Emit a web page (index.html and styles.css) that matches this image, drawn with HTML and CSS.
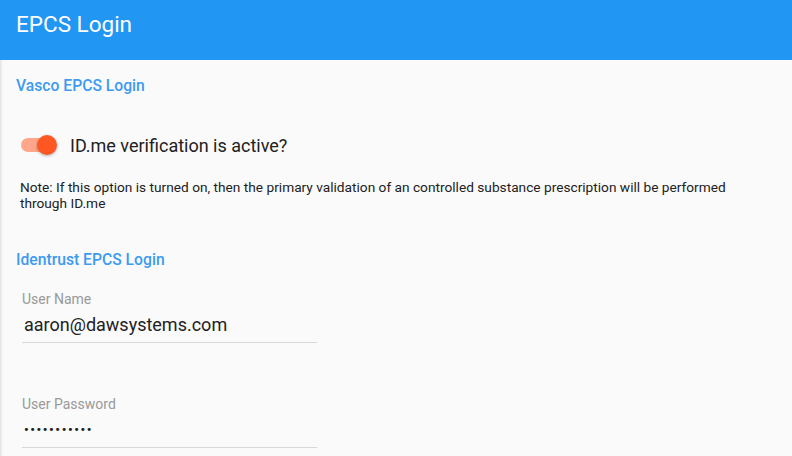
FILE: index.html
```html
<!DOCTYPE html>
<html>
<head>
<meta charset="utf-8">
<link rel="stylesheet" href="styles.css">
</head>
<body>
<header class="toolbar">EPCS Login</header>
<main class="content">
  <h2 class="section-title">Vasco EPCS Login</h2>
  <div class="toggle-row">
    <span class="toggle"><span class="track"></span><span class="thumb"></span></span>
    <span class="toggle-label">ID.me verification is active?</span>
  </div>
  <p class="note">Note: If this option is turned on, then the primary validation of an controlled substance prescription will be performed through ID.me</p>
  <h2 class="section-title second">Identrust EPCS Login</h2>
  <div class="field">
    <label class="field-label">User Name</label>
    <div class="field-value">aaron@dawsystems.com</div>
  </div>
  <div class="field pw">
    <label class="field-label">User Password</label>
    <div class="field-value dots">•••••••••••</div>
  </div>
</main>
</body>
</html>
```
FILE: styles.css
```css
html, body { margin: 0; padding: 0; }
body {
  background: #fafafa;
  font-family: Roboto, "Noto Sans", sans-serif;
  width: 792px;
  height: 456px;
  overflow: hidden;
  box-shadow: inset 3px 0 3px -2px rgba(0,0,0,0.12);
}
.toolbar {
  height: 60px;
  background: #2196f3;
  color: #fff;
  font-size: 22.5px;
  padding: 1px 0 0 16px;
  box-sizing: border-box;
  line-height: 46px;
}
.content { padding: 0 16px; }
.section-title {
  margin: 0;
  font-size: 15.7px;
  font-weight: 500;
  color: #3d9bf0;
  padding-top: 17px;
  line-height: 18px;
}
.section-title.second { padding-top: 40px; }
.toggle-row {
  display: flex;
  align-items: center;
  margin-top: 38px;
  padding-left: 5px;
  height: 24px;
}
.toggle { position: relative; width: 36px; height: 20px; display: inline-block; }
.track {
  position: absolute; left: 0; top: 3px; width: 34px; height: 14px;
  border-radius: 7px; background: #ffa68b;
}
.thumb {
  position: absolute; left: 16px; top: 0; width: 20px; height: 20px;
  border-radius: 50%; background: #ff5722;
  box-shadow: 0 1px 3px rgba(0,0,0,0.3);
}
.toggle-label {
  margin-left: 13px;
  font-size: 18px;
  color: #212121;
}
.note {
  margin: 22px 0 0 4px;
  font-size: 13.7px;
  line-height: 16px;
  color: #212121;
}
.field {
  width: 295px;
  margin-left: 6px;
  border-bottom: 1px solid #d8d8d8;
  padding-top: 22px;
}
.field.pw { margin-top: 31px; }
.field-label { display: block; font-size: 14px; color: #999; line-height: 16px; }
.field-value {
  font-size: 18px;
  color: #212121;
  line-height: 24px;
  padding: 6px 0 5px 2px;
}
.dots { font-size: 13px; letter-spacing: 1.6px; font-weight: 700; }
```
